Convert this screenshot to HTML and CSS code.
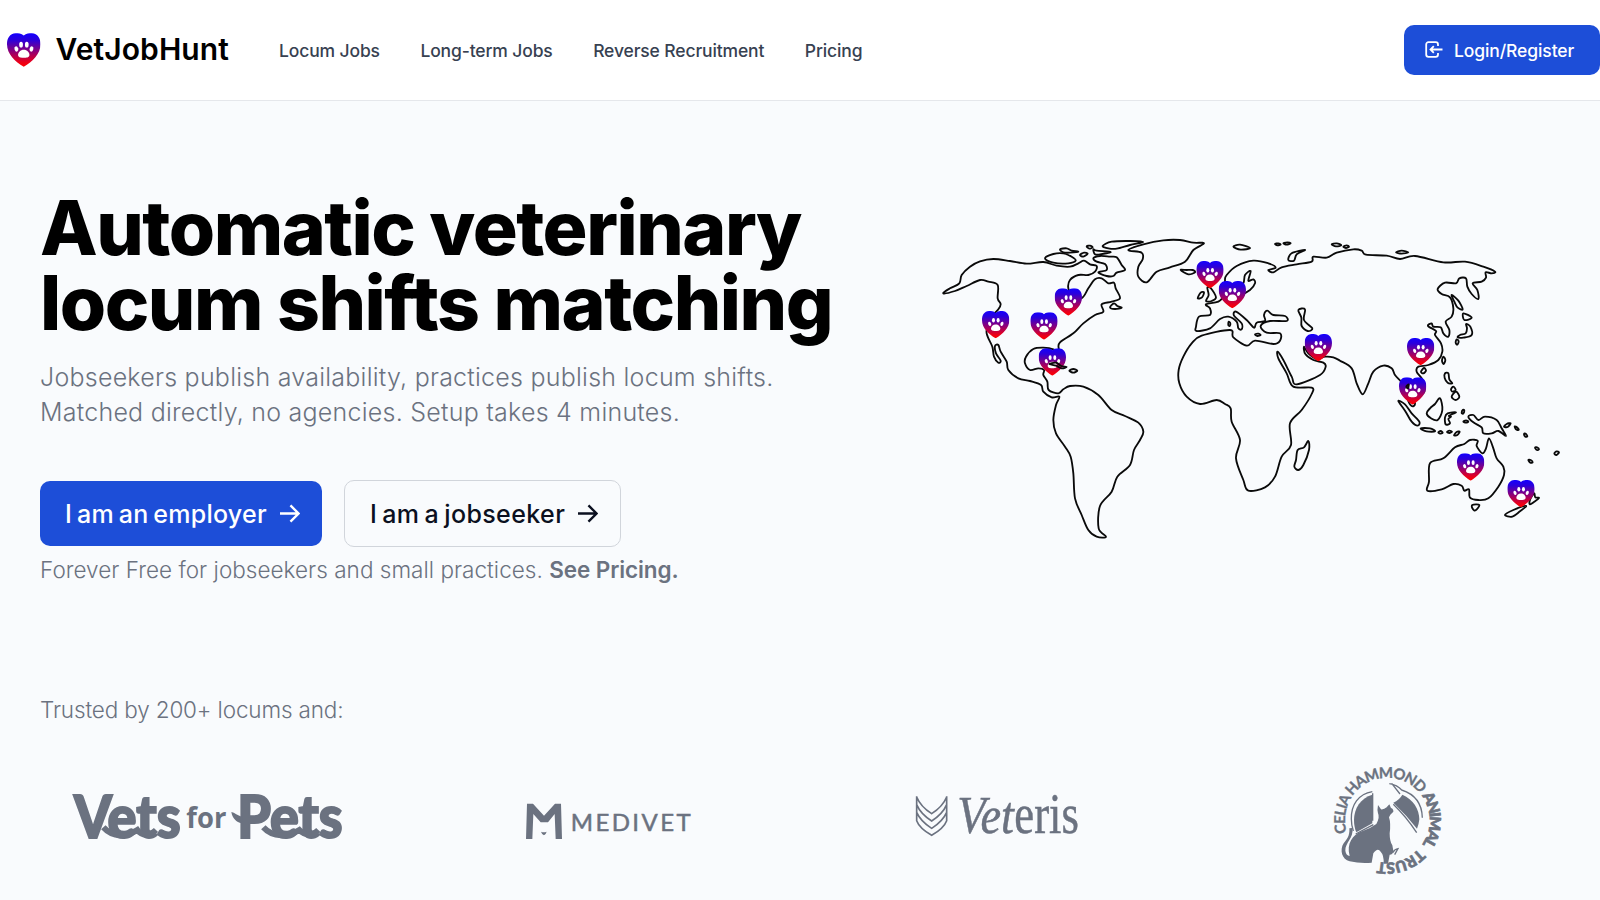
FILE: index.html
```html
<!DOCTYPE html>
<html lang="en">
<head>
<meta charset="utf-8">
<title>VetJobHunt</title>
<link rel="stylesheet" href="styles.css">
</head>
<body>
<svg class="defs" aria-hidden="true">
  <defs>
    <linearGradient id="pinFill" x1="0" y1="0" x2="0" y2="1">
      <stop offset="0" stop-color="#1400ff"/>
      <stop offset=".2" stop-color="#2a00dc"/>
      <stop offset=".85" stop-color="#e8001c"/>
      <stop offset="1" stop-color="#ff0000"/>
    </linearGradient>
    <symbol id="pin" viewBox="0 0 100 100">
      <path fill="url(#pinFill)" d="M50 7C57 0 67 0 74 0C92 1 100 15 100 33C100 62 76 85 50 100C24 85 0 62 0 33C0 15 8 1 26 0C33 0 43 0 50 7Z"/>
      <g fill="#fff">
        <ellipse cx="28" cy="47" rx="5.5" ry="8" transform="rotate(-20 28 47)"/>
        <ellipse cx="42" cy="34" rx="5.5" ry="8.5"/>
        <ellipse cx="59" cy="34" rx="5.5" ry="8.5"/>
        <ellipse cx="73" cy="47" rx="5.5" ry="8" transform="rotate(20 73 47)"/>
        <path d="M50 49C60 49 67 57 67 64C67 73 57 73 50 73C43 73 33 73 33 64C33 57 40 49 50 49Z"/>
      </g>
    </symbol>
  </defs>
</svg>

<header class="header">
  <a class="brand"><svg class="brand-mark"><use href="#pin"/></svg><span>VetJobHunt</span></a>
  <nav class="nav">
    <a>Locum Jobs</a><a>Long-term Jobs</a><a>Reverse Recruitment</a><a>Pricing</a>
  </nav>
  <a class="login">
    <svg class="login-icon" viewBox="0 0 18 18"><path d="M13 5V3.500A2.300 2.300 0 0 0 10.700 1.200H3.500A2.300 2.300 0 0 0 1.200 3.500V13.500A2.300 2.300 0 0 0 3.500 15.800H10.700A2.300 2.300 0 0 0 13 13.500V12M17.500 8.500H5.500M8.800 5.200L5.500 8.500L8.800 11.800"/></svg>
    <span>Login/Register</span>
  </a>
</header>

<main>
  <section class="hero">
    <div class="copy">
      <h1>Automatic veterinary<br>locum shifts matching</h1>
      <p class="lead">Jobseekers publish availability, practices publish locum shifts.<br>Matched directly, no agencies. Setup takes 4 minutes.</p>
      <div class="actions">
        <a class="btn btn-primary"><span>I am an employer</span><svg class="arrow" viewBox="0 0 22 20"><path d="M1 10H20M12 1.500L20.500 10L12 18.500"/></svg></a>
        <a class="btn btn-outline"><span>I am a jobseeker</span><svg class="arrow" viewBox="0 0 22 20"><path d="M1 10H20M12 1.500L20.500 10L12 18.500"/></svg></a>
      </div>
      <p class="note">Forever Free for jobseekers and small practices. <b>See Pricing.</b></p>
    </div>
    <svg class="map" viewBox="0 0 1950 960">
      <g id="land" class="coast"></g>
      <g id="pins"></g>
      <g id="overlay" class="coast"></g>
    </svg>
  </section>

  <section class="trusted">
    <p>Trusted by 200+ locums and:</p>
    <div class="logos">
      <svg class="logo logo-vfp" viewBox="0 0 960 270">
        <g class="vfp">
          <text x="72" y="203" font-size="176" textLength="320" lengthAdjust="spacingAndGlyphs">Vets</text>
          <text x="562" y="203" font-size="176" textLength="316" lengthAdjust="spacingAndGlyphs">Pets</text>
          <text class="vfp-for" x="409" y="174" font-size="88" textLength="120" lengthAdjust="spacingAndGlyphs">for</text>
        </g>
        <path fill="#6b7280" d="M544 126C554 128 563 137 575 140V160C559 157 547 144 544 126Z"/>
        <path fill="none" stroke="#6b7280" stroke-width="18" d="M160 172C190 205 230 200 262 180C275 198 300 198 318 180M640 172C670 205 715 200 748 180C765 198 788 198 805 180"/>
      </svg>
      <svg class="logo logo-medivet" viewBox="0 0 660 270">
        <path fill="#6b7280" d="M81 101H99L132 137L165 101H183L186 207H167L164 132L144 157H122L100 132L97 207H78ZM123 185Q131 188 140 185Q138 192 132 196Q125 192 123 185Z"/>
        <text class="medivet" x="212" y="183" font-size="72" textLength="360">MEDIVET</text>
      </svg>
      <svg class="logo logo-veteris" viewBox="0 0 660 270">
        <path class="chevrons" d="M80 79V152Q88 174 125 196Q162 174 170 152V79M80 81Q92 110 125 131Q158 110 170 81M80 104Q92 132 125 153Q158 132 170 104M80 127Q92 154 125 175Q158 154 170 127"/>
        <text class="veteris" x="202" y="190" font-size="160" font-style="italic" textLength="170" lengthAdjust="spacingAndGlyphs">Vet</text>
        <text class="veteris" x="373" y="190" font-size="172" textLength="194" lengthAdjust="spacingAndGlyphs">eris</text>
      </svg>
      <svg class="logo logo-celia" viewBox="0 0 450 420">
        <defs><path id="ring" d="M109.300 243.900A127 127 0 0 1 354.700 178.100A127 127 0 0 1 109.300 243.900"/></defs>
        <g class="celia">
          <text font-size="45" textLength="350" lengthAdjust="spacing"><textPath href="#ring" startOffset="-4">CELIA HAMMOND</textPath></text>
          <text class="celia-bold" font-size="46" textLength="156" lengthAdjust="spacing"><textPath href="#ring" startOffset="353">ANIMAL</textPath></text>
          <text class="celia-bold" font-size="46" textLength="136" lengthAdjust="spacing"><textPath href="#ring" startOffset="525">TRUST</textPath></text>
        </g>
        <g fill="#6b7280">
          <path d="M187 134C152 144 132 175 132 210C132 226 135 238 139 247L187 220Z"/>
          <path d="M250 158Q268 150 277 134C310 148 328 178 328 208Q327 220 321 236Q290 196 250 158Z"/>
          <path d="M204 165L213 178Q222 179 230 172L238 163L243 174Q251 177 250 185L241 194L237 202Q243 220 239 250Q239 275 247 286L250 302Q249 314 239 314L234 341H221Q222 315 212 305Q203 291 190 310L185 338Q150 341 119 334C96 329 88 300 101 280C117 262 119 250 118 235L127 234C132 264 105 278 106 302Q108 316 119 318C109 280 128 255 156 244Q180 236 199 222Q210 202 204 190Q201 180 204 165Z"/>
        </g>
        <g class="celia-lines">
          <path d="M187 125C145 132 123 165 124 207Q124 225 130 243M137 252L190 224M188 130V212M250 163Q290 202 320 248M238 101Q262 105 275 120C315 133 336 163 337 203M245 100L270 132M248 308Q255 297 264 296L254 314"/>
        </g>
      </svg>
    </div>
  </section>
</main>
<script src="map.js"></script>
</body>
</html>
```

FILE: styles.css
```css
* { box-sizing: border-box; }
html { font-size: 20px; }
body {
  margin: 0;
  height: 900px;
  overflow: hidden;
  background: #f9fbfd;
  color: #000;
  font-family: Inter, "Liberation Sans", sans-serif;
}
h1, p { margin: 0; }
.defs { position: absolute; width: 0; height: 0; }

.header {
  display: flex;
  align-items: center;
  height: 101px;
  padding-left: 7px;
  background: #fff;
  border-bottom: 1px solid #e5e7eb;
}
.brand {
  display: flex;
  align-items: center;
  gap: 15px;
  font-size: 30px;
  font-weight: 600;
  letter-spacing: 0.1px;
}
.brand span { padding-bottom: 2px; }
.brand-mark { width: 33.500px; height: 34px; }
.nav {
  display: flex;
  gap: 40.5px;
  margin-left: 50px;
  color: #374151;
  font-size: 17.5px;
  font-weight: 450;
  letter-spacing: -0.13px;
}
.login {
  display: flex;
  align-items: center;
  gap: 11px;
  width: 196px;
  height: 50px;
  margin-left: auto;
  padding-left: 21px;
  border-radius: 10px;
  background: #1d4ed8;
  color: #fff;
  font-size: 17.5px;
  font-weight: 450;
  letter-spacing: -0.1px;
}
.login-icon {
  width: 18px;
  height: 18px;
  fill: none;
  stroke: #fff;
  stroke-width: 1.8;
}

.hero {
  display: flex;
  height: 591px;
  padding-left: 40px;
}
.copy { width: 890px; padding-top: 89px; }
h1 {
  font-size: 75px;
  line-height: 75px;
  font-weight: 800;
  letter-spacing: -1.5px;
}
.lead {
  margin-top: 20px;
  color: #6b7280;
  font-size: 25px;
  line-height: 35px;
  font-weight: 300;
  letter-spacing: 0.24px;
}
.actions {
  display: flex;
  align-items: center;
  gap: 22px;
  margin-top: 50px;
}
.btn {
  display: flex;
  align-items: center;
  gap: 12px;
  padding: 0 21px 0 25px;
  border-radius: 10px;
  font-size: 25px;
  font-weight: 500;
  white-space: nowrap;
}
.btn-primary {
  width: 282px;
  height: 65px;
  background: #1d4ed8;
  color: #fff;
  letter-spacing: 0.24px;
  word-spacing: -2px;
}
.btn-outline {
  width: 277px;
  height: 67px;
  border: 1px solid #d1d5db;
  color: #0b1020;
  letter-spacing: 0.4px;
  word-spacing: -2px;
}
.arrow {
  flex: none;
  width: 21px;
  height: 19px;
  fill: none;
  stroke: currentColor;
  stroke-width: 2.5;
}
.note, .trusted p {
  color: #6b7280;
  font-size: 22.5px;
  line-height: 35px;
  font-weight: 300;
}
.note { margin-top: 5px; letter-spacing: 0.03px; }
.note b { font-weight: 600; letter-spacing: -0.1px; }
.map { width: 650px; height: 320px; margin-top: 119px; }
.coast {
  fill: none;
  stroke: #0a0a0a;
  stroke-width: 5.5;
  stroke-linejoin: round;
}

.trusted p { padding-left: 40px; letter-spacing: -0.15px; }
.logos {
  display: flex;
  align-items: center;
  height: 140px;
  margin-top: 23px;
  padding-left: 50px;
}
.logo { flex: none; height: 90px; margin-bottom: 10px; }
.logo-vfp { width: 320px; }
.logo-medivet { width: 220px; margin-left: 130px; }
.logo-veteris { width: 220px; margin-left: 170px; }
.logo-celia { width: 150px; height: 140px; margin-left: 200px; margin-bottom: 0; }
.vfp { fill: #6b7280; stroke: #6b7280; stroke-width: 6; font-family: Lato, sans-serif; font-weight: 900; }
.vfp-for { stroke: none; font-family: "Open Sans", sans-serif; font-weight: 700; }
.medivet { fill: #6b7280; stroke: #6b7280; stroke-width: 1.5; font-family: Lato, sans-serif; }
.veteris { fill: #6b7280; stroke: #6b7280; stroke-width: 1.5; font-family: "Liberation Serif", serif; }
.chevrons { fill: none; stroke: #6b7280; stroke-width: 5; }
.celia { fill: #6b7280; stroke: #6b7280; stroke-width: 1; font-family: Lato, sans-serif; font-weight: 700; }
.celia-bold { font-weight: 900; stroke-width: 2; }
.celia-lines { fill: none; stroke: #6b7280; stroke-width: 4; }
```

FILE: map.js
```js
// Coastlines as closed rings of x,y points, three units per pixel.
const rings = [
  // The Americas
  "40,220 60,205 88,190 95,165 120,140 150,124 190,117 240,123 290,131 340,126 380,137 420,140 445,130 462,122 480,133 500,138 495,155 475,165 445,165 420,180 415,205 430,235 457,233 475,205 495,178 515,175 535,190 552,188 557,205 570,235 545,245 515,253 520,275 495,285 460,310 430,340 390,367 386,385 392,405 370,388 340,383 310,387 288,410 285,430 300,450 325,445 342,450 340,465 352,485 356,510 385,520 400,508 420,498 460,500 505,525 545,570 585,588 625,608 640,635 630,660 612,690 600,735 562,770 545,815 510,858 506,925 528,950 500,950 475,930 455,885 435,835 430,760 422,710 405,680 378,640 370,600 378,555 388,530 365,532 340,515 333,495 300,483 265,475 235,450 230,425 212,395 205,375 195,378 198,400 212,422 205,428 192,410 187,380 173,350 170,330 185,290 205,268 212,252 203,235 203,195 175,185 150,180 110,198 75,213",
  // Arctic islands, Greenland, Newfoundland, Hispaniola
  "345,115 370,102 400,100 425,110 437,122 415,130 370,128",
  "390,88 410,85 425,92 445,95 420,98 400,97",
  "450,105 462,98 473,101 460,110",
  "470,79 480,77 488,82 478,86",
  "490,88 500,92 542,96 510,103 495,103",
  "490,115 510,108 540,110 560,112 575,135 585,150 560,158 550,168 530,168 505,157 530,150 525,132 500,125",
  "518,78 545,65 600,63 640,66 600,75 560,86 535,85",
  "595,90 640,73 700,61 750,60 790,68 822,70 790,90 765,125 720,142 680,155 650,187 625,170 625,140 638,118 635,98",
  "540,262 552,250 562,258 575,263 555,267",
  "418,452 430,447 442,452 430,458",
  // Eurasia and Africa
  "885,180 890,165 920,138 970,122 1015,130 1037,143 1015,150 1030,157 1055,142 1100,133 1145,125 1150,110 1190,113 1220,98 1270,88 1295,92 1308,104 1370,107 1410,117 1455,108 1540,127 1605,125 1660,140 1695,155 1685,160 1667,157 1668,173 1655,185 1628,190 1642,210 1645,237 1625,222 1612,200 1608,175 1588,175 1578,190 1545,188 1523,207 1535,222 1560,232 1570,265 1565,290 1547,305 1558,330 1555,350 1540,340 1532,322 1510,320 1505,310 1494,318 1518,333 1515,345 1533,370 1537,395 1525,420 1495,435 1465,440 1460,455 1475,475 1484,495 1480,520 1462,515 1450,505 1440,515 1455,550 1445,558 1432,535 1428,500 1412,483 1395,465 1385,445 1360,437 1330,455 1315,490 1298,523 1280,490 1265,445 1230,422 1210,412 1185,410 1160,417 1135,400 1122,380 1126,402 1150,420 1180,428 1187,440 1170,465 1100,493 1085,470 1060,420 1043,395 1045,415 1070,460 1090,500 1145,503 1145,522 1115,570 1080,610 1083,675 1055,710 1035,770 1005,802 955,812 940,780 918,715 930,660 905,605 902,565 885,552 860,540 810,552 770,530 748,490 746,450 760,410 785,370 815,347 900,330 910,352 950,377 975,362 1030,372 1050,362 1050,340 1010,338 992,318 1020,303 1070,303 1065,288 1030,285 1012,272 1002,285 1005,303 980,308 972,323 950,300 918,275 912,287 935,310 935,328 925,325 920,305 895,290 870,297 840,325 800,333 798,320 807,290 840,285 840,265 828,253 865,245 890,225 930,225 960,210 975,190 970,178 955,182 962,153 945,165 940,190 920,200 890,210",
  // North Atlantic and Russian Arctic
  "752,150 770,150 788,150 795,157 775,163",
  "910,80 930,74 960,84 932,89",
  "1035,72 1045,70 1052,74 1042,76",
  "1060,70 1072,67 1082,70 1070,74",
  "1075,120 1085,100 1125,90 1100,103 1092,122",
  "1205,73 1220,70 1234,76 1218,79",
  "1240,80 1250,76 1257,80 1248,84",
  "1398,97 1415,92 1435,97 1415,101",
  // Caspian, Britain, Ireland, Mediterranean islands, Madagascar
  "1105,270 1125,268 1122,300 1147,325 1133,333 1115,318 1114,293",
  "832,203 843,205 858,232 845,243 828,243 836,225",
  "803,235 812,218 822,217 816,232",
  "896,305 901,310 899,318 895,315",
  "975,343 985,341 992,345 982,348",
  "1135,663 1122,682 1103,690 1098,720 1093,740 1105,750 1120,735 1137,690",
  // Sakhalin, Japan, Taiwan, Hainan, Philippines
  "1565,225 1585,242 1598,268 1583,263 1573,245",
  "1600,280 1625,293 1603,300",
  "1608,312 1621,320 1625,345 1600,353 1583,352 1590,345 1607,340 1611,325",
  "1580,358 1586,364 1582,374 1577,368",
  "1540,410 1546,420 1541,432 1536,422",
  "1473,455 1482,444 1488,452 1480,460",
  "1545,460 1555,460 1558,478 1567,490 1553,488 1544,474",
  "1563,508 1570,500 1577,510 1568,515",
  "1565,530 1578,515 1588,530 1577,540",
  // Indonesia and the Pacific
  "1405,543 1425,553 1445,580 1468,605 1463,617 1445,605 1425,572",
  "1530,535 1537,570 1523,600 1503,595 1490,580 1500,565 1515,552",
  "1578,577 1553,580 1545,592 1547,613 1560,610 1555,597 1563,590 1557,587",
  "1472,625 1500,625 1515,634 1490,634",
  "1525,637 1532,633 1538,638 1530,641",
  "1551,636 1558,632 1566,635 1558,639",
  "1572,646 1580,636 1589,635 1582,645",
  "1595,578 1599,569 1603,572 1599,581",
  "1600,605 1608,601 1615,605 1608,608",
  "1615,590 1630,585 1645,600 1665,590 1700,600 1715,625 1728,648 1705,633 1685,640 1660,640 1655,622 1630,607",
  "1722,620 1730,612 1742,610 1733,621",
  "1754,619 1762,623 1766,630 1758,628",
  "1782,642 1787,641 1792,649 1786,650",
  "1815,683 1821,682 1827,688 1821,690",
  "1873,700 1880,694 1887,697 1879,705",
  "1795,720 1802,720 1808,727 1801,728",
  // Australia, Tasmania, New Zealand
  "1620,660 1643,662 1640,678 1657,700 1668,685 1677,655 1690,685 1700,715 1720,740 1722,765 1705,800 1675,835 1645,840 1620,833 1617,808 1603,812 1595,797 1570,792 1535,808 1492,812 1497,785 1500,730 1540,715 1575,682 1603,672",
  "1627,855 1648,855 1637,871 1629,868",
  "1725,885 1750,870 1788,858 1770,874 1747,890",
  "1812,820 1816,832 1827,834 1812,846 1800,853 1800,840"
];
const overlayRings = [
  "358,432 378,428 394,438 410,441 395,445 378,437",
  "1429,500 1436,493 1434,505"
];
const pins = [
  [197, 313], [342, 317], [415, 245], [367, 425], [840, 163], [907, 223],
  [1165, 382], [1472, 394], [1448, 512], [1622, 740], [1773, 820]
];

// Rounds a ring of points into a closed cubic curve.
function smooth(ring) {
  const p = ring.split(" ").map(s => s.split(",").map(Number));
  const n = p.length;
  const k = 6;
  let d = `M${p[0]}`;
  for (let i = 0; i < n; i++) {
    const a = p[(i + n - 1) % n], b = p[i], c = p[(i + 1) % n], e = p[(i + 2) % n];
    d += `C${b[0] + (c[0] - a[0]) / k},${b[1] + (c[1] - a[1]) / k} ${c[0] - (e[0] - b[0]) / k},${c[1] - (e[1] - b[1]) / k} ${c}`;
  }
  return `<path d="${d}Z"/>`;
}
document.getElementById("land").innerHTML = rings.map(smooth).join("");
document.getElementById("overlay").innerHTML = overlayRings.map(smooth).join("");
document.getElementById("pins").innerHTML = pins
  .map(([x, y]) => `<use href="#pin" x="${x - 41}" y="${y - 40}" width="82" height="82"/>`)
  .join("");
```
